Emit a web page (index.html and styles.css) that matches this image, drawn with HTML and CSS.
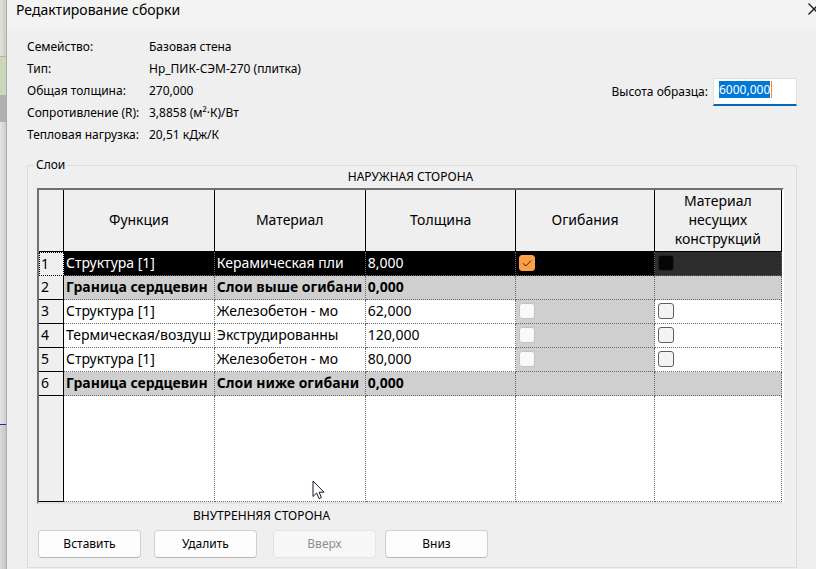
FILE: index.html
```html
<!DOCTYPE html>
<html lang="ru">

<head>
    <meta charset="UTF-8">
    <meta name="viewport" content="width=device-width, initial-scale=1.0">
    <title>Редактирование сборки</title>
    <link rel="stylesheet" href="styles.css">
</head>

<body>
    <!-- Edge of the drawing behind the dialog -->
    <div class="backdrop">
        <div class="bg-top"></div>
        <div class="bg-green"></div>
        <div class="bg-grey"></div>
        <div class="bg-sheet"></div>
        <div class="bg-rest"></div>
    </div>

    <div class="dialog">
        <div class="titlebar">
            <h1>Редактирование сборки</h1>
            <button type="button" class="close" aria-label="Закрыть">
                <svg width="12" height="12" viewBox="0 0 12 12">
                    <path d="M0.5 0.5 L11.5 11.5 M11.5 0.5 L0.5 11.5" stroke="#1a1a1a" stroke-width="1.3" fill="none" />
                </svg>
            </button>
        </div>

        <div class="content">
            <div class="summary">
                <dl class="info">
                    <dt>Семейство:</dt>
                    <dd>Базовая стена</dd>
                    <dt>Тип:</dt>
                    <dd>Нр_ПИК-СЭМ-270 (плитка)</dd>
                    <dt>Общая толщина:</dt>
                    <dd>270,000</dd>
                    <dt>Сопротивление (R):</dt>
                    <dd>3,8858 (м²·К)/Вт</dd>
                    <dt>Тепловая нагрузка:</dt>
                    <dd>20,51 кДж/К</dd>
                </dl>
                <div class="sample">
                    <label for="sampleHeight">Высота образца:</label>
                    <div class="field">
                        <input type="text" id="sampleHeight" value="6000,000">
                        <span class="caret"></span>
                    </div>
                </div>
            </div>

            <fieldset class="layers">
                <legend>Слои</legend>
                <p class="side side-outer">НАРУЖНАЯ СТОРОНА</p>

                <div class="grid">
                    <table>
                        <colgroup>
                            <col class="col-num">
                            <col class="col-text">
                            <col class="col-text">
                            <col class="col-text">
                            <col class="col-wrap">
                            <col>
                        </colgroup>
                        <thead>
                            <tr>
                                <th></th>
                                <th>Функция</th>
                                <th>Материал</th>
                                <th>Толщина</th>
                                <th>Огибания</th>
                                <th>Материал несущих конструкций</th>
                            </tr>
                        </thead>
                        <tbody>
                            <tr class="selected">
                                <th>1</th>
                                <td>Структура [1]</td>
                                <td>Керамическая пли</td>
                                <td>8,000</td>
                                <td><input type="checkbox" aria-label="Огибания, слой 1" checked></td>
                                <td class="dim"><input type="checkbox" aria-label="Несущий материал, слой 1"></td>
                            </tr>
                            <tr class="core">
                                <th>2</th>
                                <td>Граница сердцевин</td>
                                <td>Слои выше огибани</td>
                                <td>0,000</td>
                                <td></td>
                                <td></td>
                            </tr>
                            <tr>
                                <th>3</th>
                                <td>Структура [1]</td>
                                <td>Железобетон - мо</td>
                                <td>62,000</td>
                                <td class="off"><input type="checkbox" aria-label="Огибания, слой 3" disabled></td>
                                <td><input type="checkbox" aria-label="Несущий материал, слой 3"></td>
                            </tr>
                            <tr>
                                <th>4</th>
                                <td>Термическая/воздуш</td>
                                <td>Экструдированны</td>
                                <td>120,000</td>
                                <td class="off"><input type="checkbox" aria-label="Огибания, слой 4" disabled></td>
                                <td><input type="checkbox" aria-label="Несущий материал, слой 4"></td>
                            </tr>
                            <tr>
                                <th>5</th>
                                <td>Структура [1]</td>
                                <td>Железобетон - мо</td>
                                <td>80,000</td>
                                <td class="off"><input type="checkbox" aria-label="Огибания, слой 5" disabled></td>
                                <td><input type="checkbox" aria-label="Несущий материал, слой 5"></td>
                            </tr>
                            <tr class="core">
                                <th>6</th>
                                <td>Граница сердцевин</td>
                                <td>Слои ниже огибани</td>
                                <td>0,000</td>
                                <td></td>
                                <td></td>
                            </tr>
                            <tr class="empty">
                                <th></th>
                                <td></td>
                                <td></td>
                                <td></td>
                                <td></td>
                                <td></td>
                            </tr>
                        </tbody>
                    </table>

                    <svg class="pointer" width="13" height="20" viewBox="0 0 13 20">
                        <path d="M1 1 V16.5 L4.6 13 L7 18.6 L9.4 17.6 L7.1 12.2 H12 Z" fill="#fff" stroke="#111827" stroke-width="1" />
                    </svg>
                </div>

                <p class="side side-inner">ВНУТРЕННЯЯ СТОРОНА</p>

                <div class="buttons">
                    <div class="group-edit">
                        <button type="button">Вставить</button>
                        <button type="button">Удалить</button>
                    </div>
                    <div class="group-order">
                        <button type="button" disabled>Вверх</button>
                        <button type="button">Вниз</button>
                    </div>
                </div>
            </fieldset>
        </div>
    </div>

    <script>
        window.onload = function () {
            var input = document.getElementById('sampleHeight');
            input.focus();
            input.select();
        };
    </script>
</body>

</html>
```

FILE: styles.css
```css
* {
    box-sizing: border-box;
}

body {
    display: flex;
    min-height: 100vh;
    margin: 0;
    background-color: #efefef;
    color: #000;
    font-family: "Noto Sans", sans-serif;
    font-size: 12px;
    line-height: 22px;
}

/* Drawing behind the dialog */
.backdrop {
    display: flex;
    flex-direction: column;
    flex: none;
    width: 7px;
    border-right: 1px solid #ababab;
}

.bg-top {
    height: 57px;
    background: linear-gradient(to right, #dcdcdc 3px, #cbd6ba 3px);
    border-bottom: 1px solid #b0b5a8;
}

.bg-green {
    height: 38px;
    background-color: #cbd6ba;
}

.bg-grey {
    height: 27px;
    background-color: #b0b0b0;
}

.bg-sheet {
    height: 303px;
    background: linear-gradient(to right, #e6e6e6, #cdcdcd);
    border-bottom: 1px solid #10309c;
}

.bg-rest {
    flex: 1;
    background: linear-gradient(to right, #d9d9d9, #c6c6c6);
}

.dialog {
    flex: 1;
    min-width: 0;
    overflow: hidden;
}

.titlebar {
    display: flex;
    justify-content: space-between;
    height: 28px;
    padding-left: 9px;
    background-color: #f3f3f3;
}

.titlebar h1 {
    margin: 0;
    font-size: 14px;
    font-weight: normal;
    line-height: 20px;
}

.close {
    height: 18px;
    margin-right: -4px;
    padding: 3px 0;
    border: none;
    background: none;
}

.close svg {
    display: block;
}

.content {
    padding: 8px 19px 0 20px;
}

.summary {
    display: flex;
    justify-content: space-between;
}

.info {
    display: grid;
    grid-template-columns: 122px auto;
    margin: 0;
    white-space: nowrap;
}

.info dd {
    margin: 0;
}

.sample {
    display: flex;
    align-items: center;
    height: 28px;
    margin-top: 42px;
    gap: 5px;
}

.field {
    position: relative;
    height: 28px;
}

.sample input {
    display: block;
    width: 84px;
    height: 28px;
    padding: 0 5px 4px;
    border: 1px solid #e0e0e0;
    border-bottom: 2px solid #0067c0;
    outline: none;
    background-color: #fff;
    font: inherit;
}

.sample input::selection {
    background-color: #0078d7;
    color: #fff;
}

.caret {
    position: absolute;
    top: 3px;
    left: 58px;
    width: 1px;
    height: 17px;
    background-color: #ff8728;
}

/* Layers panel */
.layers {
    min-width: 0;
    margin: 8px 0 0;
    padding: 0 13px 9px 10px;
    border: 1px solid #dcdcdc;
}

.layers legend {
    margin-left: -4px;
    padding: 0 2px;
}

.side {
    margin: 0;
    line-height: 20px;
}

.side-outer {
    margin-top: -9px;
    margin-bottom: 1px;
    text-align: center;
}

.side-inner {
    margin-top: 2px;
    margin-bottom: 4px;
    padding-left: 155px;
}

.grid {
    position: relative;
    margin: 0 -1px;
    border-top: 2px solid #707070;
    border-left: 2px solid #707070;
    border-right: 2px solid #fff;
    border-bottom: 2px solid #e3e3e3;
}

.grid table {
    width: 100%;
    border-spacing: 0;
    table-layout: fixed;
    background-color: #fff;
    font-size: 14px;
    line-height: 19px;
}

.col-num {
    width: 25px;
}

.col-text {
    width: 20.3%;
}

.col-wrap {
    width: 18.6%;
}

.grid th {
    padding: 0 2px 2px;
    border-right: 1px solid #000;
    border-bottom: 1px solid #000;
    background-color: #efefef;
    font-weight: normal;
    text-align: left;
}

.grid thead th {
    height: 62px;
    padding: 0 18px 2px;
    text-align: center;
}

.grid td {
    height: 24px;
    padding: 0 2px 2px;
    border-right: 1px dotted #666;
    border-bottom: 1px dotted #666;
    white-space: nowrap;
}

.grid .core td {
    background-color: #cfcfcf;
    font-weight: bold;
}

.grid .off {
    background-color: #cfcfcf;
}

.grid .selected th {
    border: 1px dotted #000;
    padding: 0 1px 2px;
}

.grid .selected td {
    background-color: #000;
    color: #fff;
}

.grid .selected .dim {
    background-color: #2d2d2d;
}

.grid .empty td {
    height: 106px;
}

.grid input {
    display: block;
    width: 16px;
    height: 16px;
    margin: 0 1px;
    border: 1px solid #5f5f5f;
    border-radius: 3px;
    appearance: none;
    background-color: #f3f3f3;
}

.grid input:disabled {
    border-color: #c3c3c3;
    background-color: #f9f9f9;
}

.grid input:checked {
    border-color: #ff9e45;
    background: #ff9e45 url("data:image/svg+xml,%3Csvg xmlns='http://www.w3.org/2000/svg' viewBox='0 0 14 14'%3E%3Cpath d='M3 7.2 L5.8 10 L11 4.6' fill='none' stroke='%23222'/%3E%3C/svg%3E") center no-repeat;
}

.grid .dim input {
    border-color: #222;
    background-color: #060606;
}

.pointer {
    position: absolute;
    left: 273px;
    bottom: 2px;
}

/* Buttons under the table */
.buttons {
    display: flex;
    gap: 16px;
}

.group-edit {
    display: flex;
    gap: 13px;
}

.group-order {
    display: flex;
    gap: 9px;
}

.buttons button {
    width: 103px;
    height: 28px;
    padding: 0;
    border: 1px solid #d0d0d0;
    border-bottom-color: #b8b8b8;
    border-radius: 4px;
    background-color: #fdfdfd;
    color: #000;
    font: inherit;
}

.buttons button:disabled {
    border-color: #e4e4e4;
    background-color: #f7f7f7;
    color: #8f8f8f;
}
```
